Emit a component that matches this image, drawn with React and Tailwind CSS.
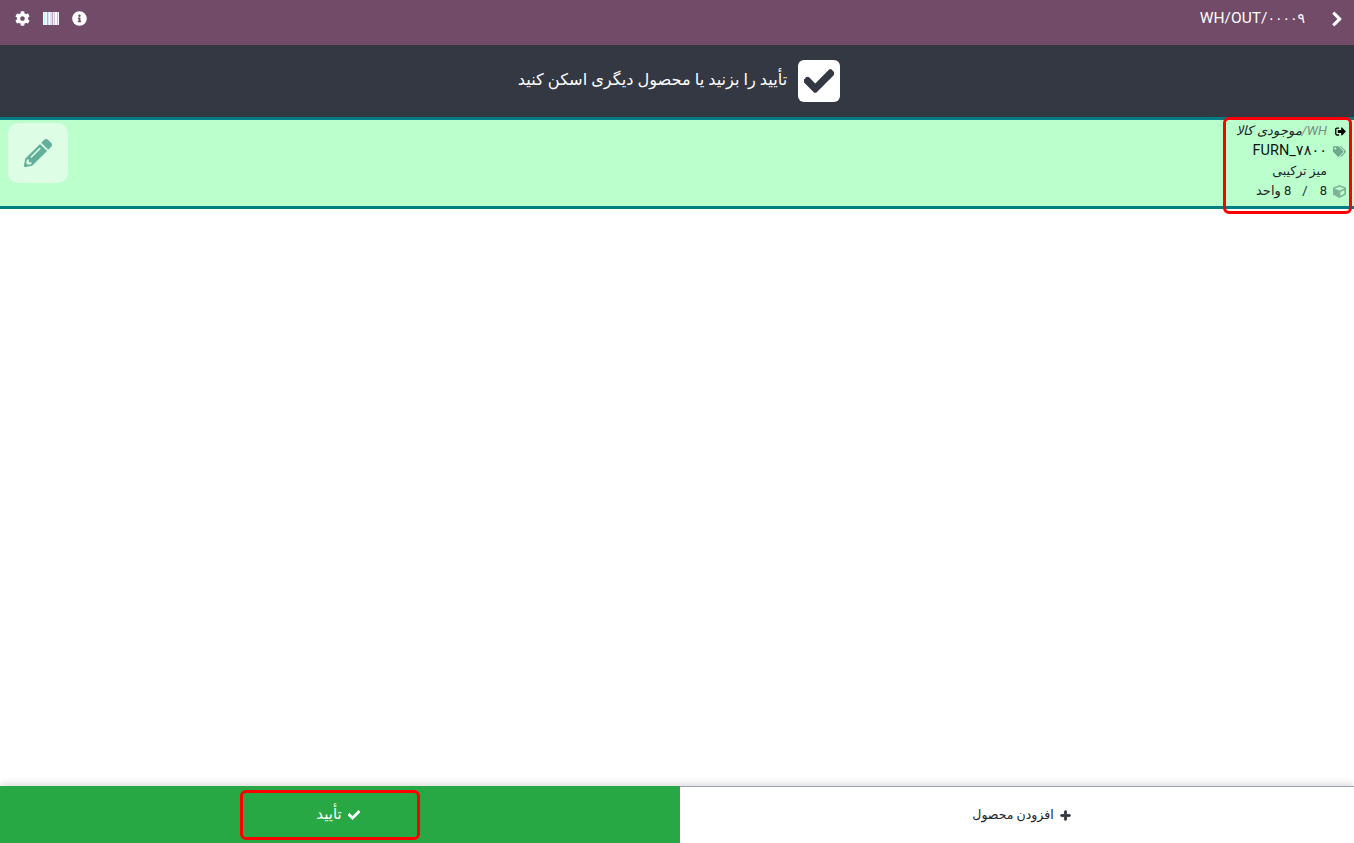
import { FaCheck, FaChevronRight, FaCog, FaCube, FaInfoCircle, FaPencilAlt, FaPlus, FaSignOutAlt, FaTags } from 'react-icons/fa'

const fontStack = "font-['Roboto','DejaVu_Sans',sans-serif]"

function BarcodeIcon() {
  const bars = [
    ['#f5f5ff', 1], ['#cdb8d4', 1], ['#ffffff', 2], ['#d9c9e0', 1], ['#f4eef7', 1], ['#bda6c6', 1],
    ['#e8d8f0', 2], ['#ffffff', 1], ['#c8e4f5', 1], ['#c4afcf', 1], ['#f8f4fa', 2], ['#b8f0ff', 1], ['#ffffff', 1],
  ]
  return (
    <div className="flex h-[13px] w-4">
      {bars.map(([color, width], i) => (
        <span key={i} className="h-full" style={{ backgroundColor: color, width }} />
      ))}
    </div>
  )
}

function App() {
  return (
    <div dir="rtl" className={`${fontStack} relative flex h-[843px] w-[1354px] flex-col overflow-hidden bg-white`}>
      {/* Top bar */}
      <header className="flex h-[45px] shrink-0 items-center justify-between bg-[#714b67] pb-[8px] pl-[15px] pr-[9px] text-white">
        <div className="flex items-center gap-[24px]">
          <FaChevronRight className="h-[16px] w-[16px] stroke-[30]" />
          <span dir="ltr" className="text-[15.5px]">
            WH/OUT/<span className="text-[14px]">۰۰۰۰۹</span>
          </span>
        </div>
        <div className="flex items-center">
          <FaInfoCircle className="h-[15px] w-[15px]" />
          <div className="mx-[13px]"><BarcodeIcon /></div>
          <FaCog className="h-[15px] w-[15px]" />
        </div>
      </header>

      {/* Scan message */}
      <section className="flex h-[72px] shrink-0 items-center justify-center gap-[11px] bg-[#343842] pl-[4px] text-white">
        <div className="flex h-[42px] w-[42px] items-center justify-center rounded-[6px] bg-white">
          <FaCheck className="h-[30px] w-[30px] stroke-[20] text-[#343842]" />
        </div>
        <span className="-mt-[1px] text-[16.2px]">تأیید را بزنید یا محصول دیگری اسکن کنید</span>
      </section>

      {/* Move line */}
      <section className="flex h-[92px] shrink-0 justify-between border-y-[3px] border-[#017e84] bg-[#bbffcc]">
        <div className="flex w-[125px] flex-col items-start pr-[8px] pt-[1px] text-[12.5px] leading-[20px] text-[#212529]">
          <div className="flex items-center gap-[8px]">
            <FaSignOutAlt className="h-[11px] w-[11px] text-black" />
            <span className="text-[13px] italic">
              <span className="text-[#7a8a80]">WH/</span>موجودی کالا
            </span>
          </div>
          <div className="flex items-center gap-[6px]">
            <FaTags className="h-[13px] w-[13px] text-[#6fa78f]" />
            <span className="text-[14.5px] text-[#111]">FURN_۷۸۰۰</span>
          </div>
          <div className="pr-[19px]">میز ترکیبی</div>
          <div className="flex items-center gap-[6px]">
            <FaCube className="h-[13px] w-[13px] text-[#7eb39a]" />
            <span className="flex text-[13px]">
              <span>8</span>
              <span className="ml-[11px] mr-[12px]">/</span>
              <span>8 واحد</span>
            </span>
          </div>
        </div>
        <div className="ml-[8px] mt-[3px] flex h-[60px] w-[60px] items-center justify-center rounded-[10px] bg-[#ddfde5]">
          <FaPencilAlt className="h-[28px] w-[28px] text-[#62ae9a]" />
        </div>
      </section>

      <main className="flex-1" />

      {/* Bottom actions */}
      <footer className="flex h-[57px] shrink-0 shadow-[0_-3px_6px_rgba(0,0,0,0.12)]">
        <button className="flex w-[674px] items-center justify-center gap-[6px] border-t border-[#9ca3af] bg-white pl-[9px] text-[12.5px] text-[#212529]">
          <FaPlus className="h-[11px] w-[11px] stroke-[40] text-[#343842]" />
          <span>افزودن محصول</span>
        </button>
        <button className="flex flex-1 items-center justify-center gap-[6px] bg-[#28a745] pr-[4px] text-[15px] text-white">
          <FaCheck className="h-[12px] w-[12px] stroke-[30]" />
          <span>تأیید</span>
        </button>
      </footer>

      {/* Annotation outlines drawn over the screenshot */}
      <div className="absolute left-[1223px] top-[117px] h-[97px] w-[129px] rounded-[6px] border-[3px] border-[#ff0000]" />
      <div className="absolute left-[240px] top-[790px] h-[50px] w-[180px] rounded-[6px] border-[3px] border-[#ff0000]" />
    </div>
  )
}

export default App
